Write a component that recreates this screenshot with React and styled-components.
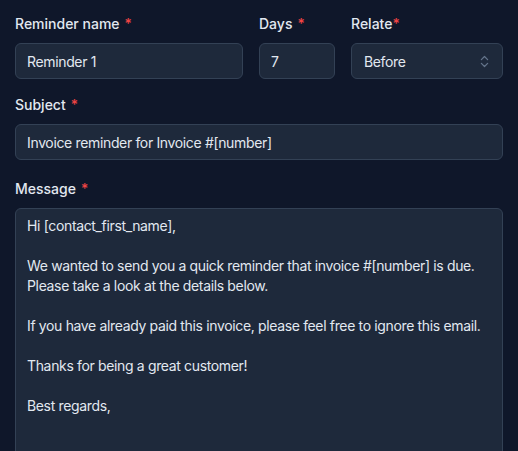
import React from "react";
import styled, { createGlobalStyle } from "styled-components";
import { ChevronsUpDown } from "lucide-react";

const Global = createGlobalStyle`
  html, body {
    margin: 0;
    background: #0f172a;
  }
  body {
    font-family: Inter, "Noto Sans", sans-serif;
    color: #e2e8f0;
    letter-spacing: -0.35px;
  }
`;

const Form = styled.form`
  display: flex;
  flex-direction: column;
  gap: 16px;
  padding: 14px 15px 0;
  height: 451px;
  box-sizing: border-box;
  overflow: hidden;
`;

const Row = styled.div`
  display: grid;
  grid-template-columns: 228px 76px 1fr;
  gap: 16px;
`;

const Field = styled.div`
  display: flex;
  flex-direction: column;
  gap: 9px;
  flex: ${(p) => (p.$grow ? 1 : "none")};
  margin-top: ${(p) => (p.$grow ? "3px" : "0")};
  min-height: 0;
`;

const Label = styled.label`
  font-size: 14px;
  line-height: 20px;
  font-weight: 500;
  letter-spacing: 0;
  color: #e2e8f0;
`;

const Star = styled.span`
  color: #ef4444;
  margin-left: ${(p) => (p.$tight ? "0" : "5px")};
`;

const Input = styled.input`
  box-sizing: border-box;
  height: 36px;
  width: 100%;
  padding: 0 11px;
  background: #1e293b;
  border: 1px solid #334155;
  border-radius: 6px;
  color: #e2e8f0;
  font-family: inherit;
  font-size: 14px;
  letter-spacing: inherit;
  outline: none;
`;

const SelectBox = styled.div`
  box-sizing: border-box;
  height: 36px;
  display: flex;
  align-items: center;
  justify-content: space-between;
  padding: 0 10px 0 12px;
  background: #1e293b;
  border: 1px solid #334155;
  border-radius: 6px;
  font-size: 14px;
  color: #e2e8f0;
`;

const TextArea = styled.textarea`
  box-sizing: border-box;
  flex: 1;
  width: 100%;
  min-height: 300px;
  padding: 7px 11px;
  background: #1e293b;
  border: 1px solid #334155;
  border-radius: 6px 6px 0 0;
  color: #e2e8f0;
  font-family: inherit;
  font-size: 14px;
  letter-spacing: inherit;
  line-height: 20px;
  resize: none;
  outline: none;
`;

const message = `Hi [contact_first_name],

We wanted to send you a quick reminder that invoice #[number] is due.
Please take a look at the details below.

If you have already paid this invoice, please feel free to ignore this email.

Thanks for being a great customer!

Best regards,`;

export default function App() {
  return (
    <>
      <Global />
      <Form>
        <Row>
          <Field>
            <Label>
              Reminder name<Star>*</Star>
            </Label>
            <Input defaultValue="Reminder 1" />
          </Field>
          <Field>
            <Label>
              Days<Star>*</Star>
            </Label>
            <Input defaultValue="7" />
          </Field>
          <Field>
            <Label>
              Relate<Star $tight>*</Star>
            </Label>
            <SelectBox>
              <span>Before</span>
              <ChevronsUpDown size={15} color="#64748b" strokeWidth={2} />
            </SelectBox>
          </Field>
        </Row>
        <Field>
          <Label>
            Subject<Star>*</Star>
          </Label>
          <Input defaultValue="Invoice reminder for Invoice #[number]" />
        </Field>
        <Field $grow>
          <Label>
            Message<Star>*</Star>
          </Label>
          <TextArea defaultValue={message} />
        </Field>
      </Form>
    </>
  );
}
